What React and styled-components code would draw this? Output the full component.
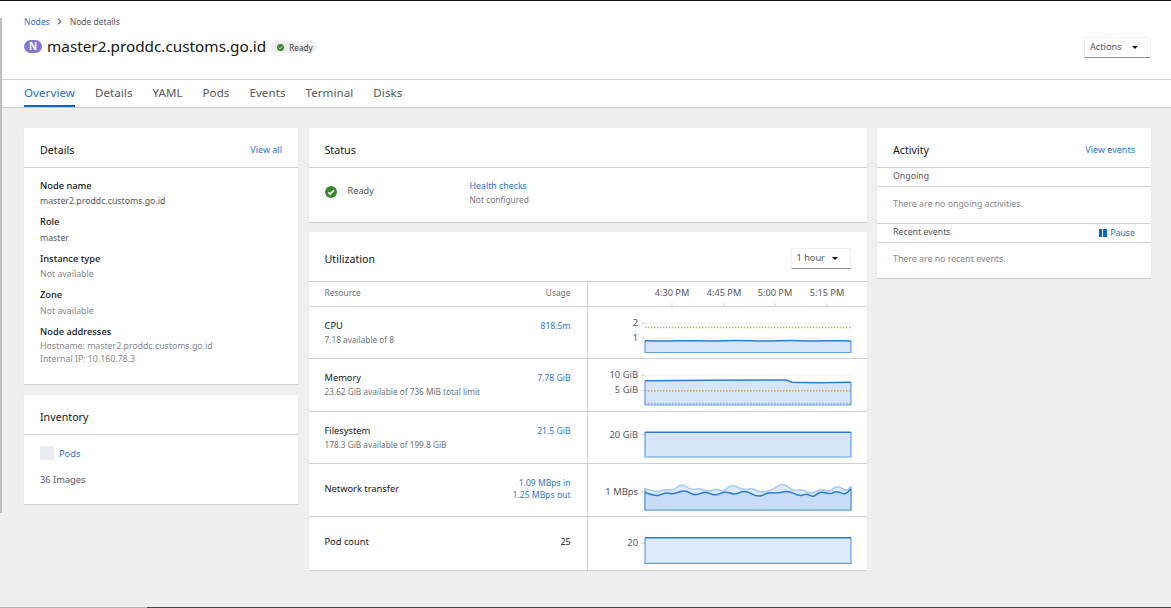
import React from "react";
import styled, { createGlobalStyle } from "styled-components";

const Global = createGlobalStyle`
  html, body { margin: 0; padding: 0; background: #efefef; }
  body { font-family: "Noto Sans", "Liberation Sans", sans-serif; font-size: 9.5px; color: #151515; overflow: hidden; }
  * { box-sizing: border-box; }
`;

const LINK = "#2f75cf";
const TEXT_SOFT = "#55585c";

const Page = styled.div`
  position: relative;
  width: 1171px;
  height: 608px;
  overflow: hidden;
  border-top: 1px solid #111;
`;

const SideStrip = styled.div`
  position: absolute;
  left: 0;
  top: 17px;
  width: 2px;
  height: 495px;
  background: #bdbdbd;
`;

const BottomEdge = styled.div`
  position: absolute;
  left: 0;
  right: 0;
  bottom: 0;
  height: 1px;
  background: linear-gradient(90deg, #b5b5b5 0 147px, #444 147px);
`;

const Header = styled.header`
  background: #fff;
  height: 79px;
  padding: 14px 20px 0 24px;
  border-bottom: 1px solid #d2d2d2;
`;

const Breadcrumb = styled.div`
  display: flex;
  align-items: center;
  height: 13px;
  font-size: 8.5px;
  color: ${TEXT_SOFT};
`;

const Crumb = styled.a`
  color: ${LINK};
`;

const CrumbArrow = styled.svg`
  width: 5px;
  height: 7px;
  margin: 0 8px 0 7px;
`;

const TitleRow = styled.div`
  display: flex;
  align-items: center;
  justify-content: space-between;
  margin-top: 8px;
`;

const TitleLeft = styled.div`
  display: flex;
  align-items: center;
  padding-bottom: 2px;
`;

const NodeBadge = styled.span`
  width: 18px;
  height: 13px;
  border-radius: 7px;
  background: #8476d1;
  color: #fff;
  font-size: 10px;
  font-weight: 700;
  text-align: center;
  line-height: 13px;
  margin-right: 5px;
`;

const Title = styled.h1`
  margin: 0;
  font-size: 15.3px;
  font-weight: 400;
  line-height: 20px;
  color: #151515;
`;

const ReadyPill = styled.span`
  display: inline-flex;
  align-items: center;
  gap: 5px;
  height: 12px;
  margin: 2px 0 0 5px;
  padding: 0 4px 0 6px;
  border-radius: 6px;
  background: #f0f0f0;
  font-size: 8.2px;
  color: #3c3f42;
`;

const Select = styled.div`
  display: flex;
  align-items: center;
  justify-content: space-between;
  width: ${(p) => p.$w}px;
  height: 21px;
  padding: 0 12px 2px 5px;
  background: #fff;
  border: 1px solid #f0f0f0;
  border-bottom-color: #8a8d90;
  font-size: 9.2px;
  color: ${TEXT_SOFT};
`;

const Caret = styled.span`
  width: 0;
  height: 0;
  margin-top: 2px;
  border-left: 3px solid transparent;
  border-right: 3px solid transparent;
  border-top: 3px solid #151515;
`;

const Tabs = styled.nav`
  display: flex;
  gap: 20px;
  height: 28px;
  padding-left: 24px;
  background: #fff;
  border-bottom: 1px solid #d2d2d2;
`;

const Tab = styled.a`
  height: 27px;
  padding-top: 5px;
  font-size: 11.55px;
  letter-spacing: 0.07px;
  line-height: 16px;
  color: ${(p) => (p.$active ? "#1f6fd0" : TEXT_SOFT)};
  border-bottom: 2px solid ${(p) => (p.$active ? "#06c" : "transparent")};
`;

const Columns = styled.main`
  display: grid;
  grid-template-columns: 274px 558px 274px;
  gap: 10.5px;
  padding: 20px 0 0 24px;
  align-items: start;
`;

const Stack = styled.div`
  display: flex;
  flex-direction: column;
  gap: ${(p) => p.$gap}px;
`;

const Card = styled.section`
  background: #fff;
  box-shadow: 0 1px 1px rgba(3, 3, 3, 0.12);
`;

const CardHead = styled.div`
  display: flex;
  align-items: center;
  justify-content: space-between;
  height: ${(p) => p.$h || 40}px;
  padding: 4px 16px 0;
  border-bottom: 1px solid #d2d2d2;
`;

const CardTitle = styled.h2`
  margin: 0;
  font-size: 10.7px;
  font-weight: 400;
  color: #151515;
`;

const Link = styled.a`
  color: ${LINK};
  font-size: ${(p) => p.$size || 9}px;
`;

const DetailList = styled.dl`
  margin: 0;
  padding: 11px 16px 0;
  height: 216px;
`;

const Term = styled.dt`
  font-size: 9.3px;
  font-weight: 500;
  line-height: 14px;
  color: #151515;
`;

const Desc = styled.dd`
  margin: ${(p) => p.$gap || 1}px 0 ${(p) => p.$after || 7}px;
  font-size: 8.75px;
  line-height: 14px;
  color: ${(p) => (p.$muted ? "#85898d" : TEXT_SOFT)};
`;

const AddressLine = styled.div`
  line-height: 13px;
`;

const InventoryBody = styled.div`
  height: 69px;
  padding: 11px 16px 0;
  font-size: 9.3px;
  color: ${TEXT_SOFT};
`;

const InventoryRow = styled.div`
  display: flex;
  align-items: center;
  gap: 5px;
  margin-bottom: 13px;
`;

const Skeleton = styled.span`
  width: 14px;
  height: 14px;
  background: #e9edf3;
`;

const StatusBody = styled.div`
  display: flex;
  height: 54px;
  padding: 11px 16px 0;
`;

const StatusMain = styled.div`
  display: flex;
  align-items: center;
  gap: 11px;
  width: 145px;
  height: 26px;
  font-size: 9.2px;
  color: ${TEXT_SOFT};
`;

const StatusLabel = styled.span`
  padding-bottom: 3px;
`;

const HealthText = styled.div`
  font-size: 8.4px;
  line-height: 14px;
  color: #74787c;
`;

const UtilRow = styled.div`
  display: grid;
  grid-template-columns: 279px 1fr;
  height: ${(p) => p.$h}px;
  border-bottom: ${(p) => (p.$last ? "none" : "1px solid #d2d2d2")};
`;

const UtilInfo = styled.div`
  display: flex;
  flex-direction: column;
  justify-content: center;
  padding: 0 16px;
  border-right: 1px solid #d2d2d2;
`;

const UtilHead = styled.div`
  display: flex;
  align-items: center;
  justify-content: space-between;
  padding-bottom: ${(p) => (p.$single ? 3 : 0)}px;
`;

const UtilName = styled.div`
  font-size: 9.3px;
  line-height: 14px;
  color: #151515;
`;

const UtilSub = styled.div`
  font-size: 8.25px;
  line-height: 14px;
  color: #6f7377;
`;

const UtilValue = styled.div`
  text-align: right;
  font-size: 8.6px;
  line-height: 12px;
  color: ${(p) => (p.$plain ? "#151515" : LINK)};
`;

const ColLabel = styled.span`
  font-size: 8.4px;
  color: #6a6e73;
`;

const ChartSvg = styled.svg`
  display: block;
  width: 279px;
  height: 100%;
  font-family: "Noto Sans", "Liberation Sans", sans-serif;
`;

const SubHead = styled.div`
  display: flex;
  align-items: center;
  justify-content: space-between;
  height: 19px;
  padding: 0 16px 3px;
  border-bottom: 1px solid #d2d2d2;
  font-size: 8.8px;
  color: ${TEXT_SOFT};
`;

const PauseLink = styled.a`
  display: flex;
  align-items: center;
  gap: 3px;
  margin-top: 3px;
  color: ${LINK};
  font-size: 8.8px;
`;

const PauseBar = styled.span`
  width: 8px;
  height: 8px;
  background: linear-gradient(90deg, #06c 0 3.5px, transparent 3.5px 4.5px, #06c 4.5px);
`;

const Empty = styled.div`
  display: flex;
  align-items: center;
  height: ${(p) => p.$h}px;
  padding: 0 16px 3px;
  font-size: 8.8px;
  color: #85898d;
  border-bottom: ${(p) => (p.$divided ? "1px solid #d2d2d2" : "none")};
`;

const CheckCircle = ({ size, color = "#3e8635" }) => (
  <svg width={size} height={size} viewBox="0 0 24 24">
    <circle cx="12" cy="12" r="12" fill={color} />
    <path d="M6.5 12.5l3.8 3.8 7.4-7.8" fill="none" stroke="#fff" strokeWidth="3.2" />
  </svg>
);

// smooth line through the points, using midpoints as anchors
const smooth = (pts) => {
  let d = `M${pts[0][0]} ${pts[0][1]}`;
  for (let i = 1; i < pts.length - 1; i++) {
    const mx = (pts[i][0] + pts[i + 1][0]) / 2;
    const my = (pts[i][1] + pts[i + 1][1]) / 2;
    d += ` Q${pts[i][0]} ${pts[i][1]} ${mx} ${my}`;
  }
  const last = pts[pts.length - 1];
  return `${d} L${last[0]} ${last[1]}`;
};

// the midpoint smoothing flattens peaks, so stretch around the mean a bit
const wave = (list) => {
  const mean = list.reduce((s, p) => s + p[1], 0) / list.length;
  return list.map(([x, y]) => [x / 3 - 8, (mean + (y - mean) * 1.6) / 3 - 54]);
};

const lightWave = wave([
  [195, 236], [225, 244], [255, 238], [280, 240], [305, 227], [335, 240], [355, 235], [385, 243],
  [410, 236], [430, 243], [455, 228], [490, 240], [515, 235], [545, 245], [580, 238], [610, 225],
  [640, 242], [665, 237], [695, 247], [720, 237], [750, 243], [770, 230], [800, 242], [812, 232],
]);

const darkWave = wave([
  [195, 248], [230, 257], [255, 248], [280, 252], [315, 243], [345, 255], [375, 246], [405, 255],
  [435, 246], [465, 253], [495, 244], [535, 258], [565, 248], [590, 250], [625, 245], [660, 256],
  [680, 250], [700, 258], [720, 246], [750, 252], [770, 245], [795, 253], [812, 242],
]);

const AREA_L = 57;
const AREA_R = 263;

const Area = ({ line, bottom, fill = "#d6e6f7", stroke = "#5c9ee3", top = "#2b7cd3" }) => (
  <>
    <path d={`${line} L${AREA_R} ${bottom} L${AREA_L} ${bottom} Z`} fill={fill} />
    <path
      d={`M${AREA_L} ${line.match(/M\S+ (\S+)/)[1]} V${bottom} H${AREA_R} V${line.match(/(\S+)$/)[1]}`}
      fill="none"
      stroke={stroke}
      strokeWidth="1.2"
    />
    <path d={line} fill="none" stroke={top} strokeWidth="1.5" />
  </>
);

const Tick = ({ y, label }) => (
  <>
    <line x1="57" x2="263" y1={y} y2={y} stroke="#f0f0f0" />
    <line x1="53" x2="57" y1={y} y2={y} stroke="#d2d2d2" />
    <text x="50" y={y + 3} textAnchor="end" fontSize="9.4" fill={TEXT_SOFT}>{label}</text>
  </>
);

const Dotted = ({ y, color = "#efa860" }) => (
  <line x1={AREA_L} x2={AREA_R} y1={y} y2={y} stroke={color} strokeWidth="1.4" strokeDasharray="1.5 1.5" />
);

const cpuLine = smooth([[57, 33.7], [80, 34], [100, 33.7], [125, 34], [150, 33.3], [178, 34.3], [200, 33.3], [225, 34], [245, 33.7], [263, 34]]);

const TimeAxis = () => (
  <ChartSvg viewBox="0 0 279 24">
    {[[84, "4:30 PM"], [136, "4:45 PM"], [187, "5:00 PM"], [239, "5:15 PM"]].map(([x, t]) => (
      <g key={t}>
        <text x={x} y="14" textAnchor="middle" fontSize="9.2" fill={TEXT_SOFT}>{t}</text>
        <line x1={x} x2={x} y1="21" y2="24" stroke="#d2d2d2" />
      </g>
    ))}
  </ChartSvg>
);

const CpuChart = () => (
  <ChartSvg viewBox="0 0 279 51">
    <Tick y={16} label="2" />
    <Tick y={31} label="1" />
    <Dotted y={20.5} />
    <Area line={cpuLine} bottom={45.5} />
  </ChartSvg>
);

const MemoryChart = () => (
  <ChartSvg viewBox="0 0 279 52">
    <Tick y={16.3} label="10 GiB" />
    <Tick y={31.3} label="5 GiB" />
    <Area line="M57 21.7 L120 21.3 L198 21 L204 23.3 L230 23.7 L263 23.3" bottom={46} />
    <Dotted y={31.7} color="#d79a55" />
    <Dotted y={44.5} color="#8fb5de" />
  </ChartSvg>
);

const FilesystemChart = () => (
  <ChartSvg viewBox="0 0 279 51">
    <Tick y={22.7} label="20 GiB" />
    <Area line="M57 20.3 L263 20.3" bottom={45} />
  </ChartSvg>
);

const NetworkChart = () => (
  <ChartSvg viewBox="0 0 279 52">
    <Tick y={27.7} label="1 MBps" />
    <Area line={smooth(lightWave)} bottom={46} fill="#dceafa" top="#a3cbf3" />
    <Area line={smooth(darkWave)} bottom={46} fill="#c7dcf5" />
  </ChartSvg>
);

const PodChart = () => (
  <ChartSvg viewBox="0 0 279 53">
    <Tick y={26.3} label="20" />
    <Area line="M57 20.7 L263 20.7" bottom={46.3} fill="#d6e6f7cc" />
  </ChartSvg>
);

const tabs = ["Overview", "Details", "YAML", "Pods", "Events", "Terminal", "Disks"];

export default function App() {
  return (
    <Page>
      <Global />
      <SideStrip />
      <BottomEdge />
      <Header>
        <Breadcrumb>
          <Crumb>Nodes</Crumb>
          <CrumbArrow viewBox="0 0 5 7">
            <path d="M1 .8L3.8 3.5 1 6.2" fill="none" stroke="#6a6e73" strokeWidth="1.2" />
          </CrumbArrow>
          <span>Node details</span>
        </Breadcrumb>
        <TitleRow>
          <TitleLeft>
            <NodeBadge>N</NodeBadge>
            <Title>master2.proddc.customs.go.id</Title>
            <ReadyPill>
              <CheckCircle size={7} />
              Ready
            </ReadyPill>
          </TitleLeft>
          <Select $w={67}>
            Actions
            <Caret />
          </Select>
        </TitleRow>
      </Header>
      <Tabs>
        {tabs.map((t, i) => (
          <Tab key={t} $active={i === 0}>{t}</Tab>
        ))}
      </Tabs>
      <Columns>
        <Stack $gap={11}>
          <Card>
            <CardHead>
              <CardTitle>Details</CardTitle>
              <Link>View all</Link>
            </CardHead>
            <DetailList>
              <Term>Node name</Term>
              <Desc>master2.proddc.customs.go.id</Desc>
              <Term>Role</Term>
              <Desc $gap={2}>master</Desc>
              <Term>Instance type</Term>
              <Desc $muted>Not available</Desc>
              <Term>Zone</Term>
              <Desc $gap={2} $muted>Not available</Desc>
              <Term>Node addresses</Term>
              <Desc $muted>
                <AddressLine>Hostname: master2.proddc.customs.go.id</AddressLine>
                <AddressLine>Internal IP: 10.160.78.3</AddressLine>
              </Desc>
            </DetailList>
          </Card>
          <Card>
            <CardHead>
              <CardTitle>Inventory</CardTitle>
            </CardHead>
            <InventoryBody>
              <InventoryRow>
                <Skeleton />
                <Link $size={9.3}>Pods</Link>
              </InventoryRow>
              <div>36 Images</div>
            </InventoryBody>
          </Card>
        </Stack>
        <Stack $gap={10}>
          <Card>
            <CardHead>
              <CardTitle>Status</CardTitle>
            </CardHead>
            <StatusBody>
              <StatusMain>
                <CheckCircle size={12} />
                <StatusLabel>Ready</StatusLabel>
              </StatusMain>
              <HealthText>
                <Link $size={8.8}>Health checks</Link>
                <div>Not configured</div>
              </HealthText>
            </StatusBody>
          </Card>
          <Card>
            <CardHead $h={50}>
              <CardTitle>Utilization</CardTitle>
              <Select $w={60}>
                1 hour
                <Caret />
              </Select>
            </CardHead>
            <UtilRow $h={25}>
              <UtilInfo>
                <UtilHead $single>
                  <ColLabel>Resource</ColLabel>
                  <ColLabel>Usage</ColLabel>
                </UtilHead>
              </UtilInfo>
              <TimeAxis />
            </UtilRow>
            <UtilRow $h={52}>
              <UtilInfo>
                <UtilHead>
                  <UtilName>CPU</UtilName>
                  <UtilValue>818.5m</UtilValue>
                </UtilHead>
                <UtilSub>7.18 available of 8</UtilSub>
              </UtilInfo>
              <CpuChart />
            </UtilRow>
            <UtilRow $h={53}>
              <UtilInfo>
                <UtilHead>
                  <UtilName>Memory</UtilName>
                  <UtilValue>7.78 GiB</UtilValue>
                </UtilHead>
                <UtilSub>23.62 GiB available of 736 MiB total limit</UtilSub>
              </UtilInfo>
              <MemoryChart />
            </UtilRow>
            <UtilRow $h={52}>
              <UtilInfo>
                <UtilHead>
                  <UtilName>Filesystem</UtilName>
                  <UtilValue>21.5 GiB</UtilValue>
                </UtilHead>
                <UtilSub>178.3 GiB available of 199.8 GiB</UtilSub>
              </UtilInfo>
              <FilesystemChart />
            </UtilRow>
            <UtilRow $h={53}>
              <UtilInfo>
                <UtilHead $single>
                  <UtilName>Network transfer</UtilName>
                  <UtilValue>
                    <div>1.09 MBps in</div>
                    <div>1.25 MBps out</div>
                  </UtilValue>
                </UtilHead>
              </UtilInfo>
              <NetworkChart />
            </UtilRow>
            <UtilRow $h={53} $last>
              <UtilInfo>
                <UtilHead $single>
                  <UtilName>Pod count</UtilName>
                  <UtilValue $plain>25</UtilValue>
                </UtilHead>
              </UtilInfo>
              <PodChart />
            </UtilRow>
          </Card>
        </Stack>
        <Card>
          <CardHead>
            <CardTitle>Activity</CardTitle>
            <Link>View events</Link>
          </CardHead>
          <SubHead>Ongoing</SubHead>
          <Empty $h={37} $divided>There are no ongoing activities.</Empty>
          <SubHead>
            Recent events
            <PauseLink>
              <PauseBar />
              Pause
            </PauseLink>
          </SubHead>
          <Empty $h={35}>There are no recent events.</Empty>
        </Card>
      </Columns>
    </Page>
  );
}
